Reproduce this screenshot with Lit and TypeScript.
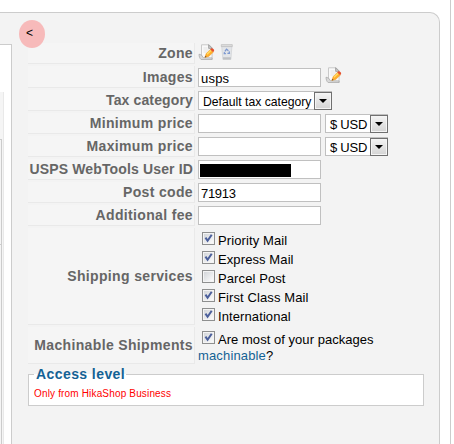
import { LitElement, html, css } from "lit";
import { customElement } from "lit/decorators.js";
import { classMap } from "lit/directives/class-map.js";

const editIcon = html`<svg class="icon" width="17" height="16" viewBox="0 0 17 16">
  <path d="M3.5.8h7.6l3 3v11.4H3.5z" fill="#f9f9f9" stroke="#c4c4c4" stroke-width=".9"/>
  <path d="M10.6.8v3.6h3.7z" fill="#c9c9c9" stroke="#8f8f8f" stroke-width=".7"/>
  <path d="M5.5 4h4M5.5 6h6M5.5 8h4" stroke="#e3e3e3"/>
  <path d="M1 10.2l2.5.8 1.8 2.7 8.8.2v1.7H3.2C1.7 14.5 1 12.5 1 10.2z" fill="#d9d9d9" stroke="#a5a5a5" stroke-width=".7"/>
  <path d="M6.8 13.4l1.4-3.8 4.3-4.2 2.9 2.7-4.7 4.3z" fill="#ffae2c" stroke="#f09a22" stroke-width=".5"/>
  <path d="M9 10.3l4.2-4.1" stroke="#ffdf66" stroke-width="1.2"/>
  <path d="M12.2 5.5l1-1.1c1-.9 3.6 1.2 2.9 2.5l-1 1.2z" fill="#e5502f"/>
  <path d="M6.8 13.4l.6-1.7 1.2 1.2z" fill="#6b4a35"/></svg>`;

const trashIcon = html`<svg class="icon" width="16" height="16" viewBox="0 0 16 16">
  <path d="M2.7 2.2h10.2l-1 13.2H3.9z" fill="#e3e5e8" stroke="#cfd1d4" stroke-width=".7"/>
  <path d="M2.3.6h11v2h-11z" fill="#dedede" stroke="#b5b5b5" stroke-width=".6"/>
  <path d="M3.9 13.2h8l-.2 2.2H4.1z" fill="#bfc1c4"/>
  <path d="M5.9 7.4L7.5 5.2l1.9 1.6M10.2 7.4l.2 2H8.4M6.9 9.7H5.3l.2-1.6" fill="none" stroke="#7d99d0" stroke-width="1.3"/></svg>`;

@customElement("app-root")
export class AppRoot extends LitElement {
  static styles = css`
    :host { display: block; position: relative; width: 454px; height: 444px; overflow: hidden; background: #fff;
      font: 13px/16px "Liberation Sans", Arial, sans-serif; color: #000; }
    * { box-sizing: border-box; }
    .page { width: 451px; height: 444px; border-right: 1px solid #ccc; padding-top: 12px; }
    .panel { width: 440px; height: 440px; border: 1px solid #ccc; border-width: 1px 1px 0 0; border-radius: 0 10px 0 0;
      background: #f3f3f3; display: flex; padding-top: 30px; }
    .side { flex: none; margin-top: 1px; width: 12px; height: 420px; background: #fff; border: 1px solid #ccc; border-left: 0; padding-top: 47px; }
    .sidebar { width: 4px; height: 380px; background: #f5f5f5; border-right: 1px solid #e9e9e9; padding-top: 47px; }
    .box { width: 2px; height: 330px; border: 1px solid #ccc; border-left: 0; }
    .box i { display: block; height: 105px; border-bottom: 1px solid #ccc; }
    .main { margin-left: 16px; width: 396px; }
    .form { display: grid; grid-template-columns: 167px 1fr; column-gap: 3px; row-gap: 2px;
      grid-template-rows: 21px 22px repeat(6, 21px) 97px 37px; }
    .label { background: #f5f5f5; border: 1px solid #e9e9e9; border-width: 0 1px 1px 0; display: flex; align-items: center;
      justify-content: flex-end; font-weight: bold; font-size: 14px; letter-spacing: .35px; color: #666; padding-right: 1px; white-space: nowrap; }
    .tight { letter-spacing: .14px; }
    .value { display: flex; align-items: flex-start; padding-top: 1px; gap: 4px; }
    .input { width: 123px; height: 19px; border: 1px solid #c0c0c0; background: #fff; padding: 2px 0 0 2px; letter-spacing: .2px; }
    .digits { letter-spacing: -.3px; }
    .redact { width: 91px; height: 13px; background: #000; margin-top: 1px; margin-left: -1px; }
    .select { height: 19px; border: 1px solid #c0c0c0; background: #fff; display: flex; justify-content: space-between; padding-left: 4px; white-space: nowrap; line-height: 20px; }
    .tax { width: 134px; font-size: 12.2px; }
    .usd { width: 63px; letter-spacing: -.25px; line-height: 19px; }
    .arrow { width: 18px; height: 18px; margin-right: -1px; border: 1px solid #707070; background: linear-gradient(#f4f4f4, #d4d4d4);
      box-shadow: inset 0 0 0 1px #f5f5f5; flex: none; display: grid; place-items: center; }
    .arrow svg { display: block; }
    .icon { display: block; flex: none; }
    .zone { gap: 4px; }
    .images { padding-top: 2px; }
    .images .icon { margin-top: -1px; }
    .list { flex-direction: column; gap: 0; padding: 4px 0 0 4px; }
    .check { display: flex; gap: 3px; height: 19px; flex: none; letter-spacing: .1px; }
    .check span { padding-top: 1px; white-space: nowrap; }
    .cb { display: block; width: 13px; height: 13px; flex: none; border: 1px solid #8e8f8f; background: linear-gradient(135deg, #cfd2d6, #fff);
      box-shadow: inset 0 0 0 1px #f4f4f4; }
    .cb svg { display: block; }
    .mach { display: block; padding: 4px 0 0; letter-spacing: .15px; }
    .mach .check { margin-left: 4px; height: 17px; letter-spacing: .04px; }
    .mach a { color: #146295; }
    .access { position: relative; margin-top: 10px; height: 32px; border: 1px solid #ccc; background: #fff; padding: 12px 0 0 5px;
      font-size: 10px; line-height: 14px; letter-spacing: .16px; color: #f00; white-space: nowrap; }
    .legend { position: absolute; left: 5px; top: -9px; padding: 0 1px 0 2px; font: bold 14px/16px "Liberation Sans", Arial, sans-serif;
      letter-spacing: .42px; color: #146295; background: linear-gradient(#f3f3f3 8px, #fff 8px); }
    .marker { position: absolute; left: 19px; top: 20px; width: 26px; height: 28px; border-radius: 50%; background: #f7baba;
      font-size: 12px; line-height: 27px; padding-left: 7px; }
  `;

  private check(text: string, on = true) {
    return html`<div class="check"><i class="cb">${on
      ? html`<svg width="11" height="11" viewBox="0 0 11 11"><path d="M2.5 4.6l2.1 3.2L8.7 1.7" fill="none" stroke="#4b5f9b" stroke-width="2"/></svg>`
      : ""}</i><span>${text}</span></div>`;
  }

  private select(text: string, kind: string) {
    return html`<div class=${classMap({ select: true, [kind]: true })}><span>${text}</span>
      <i class="arrow"><svg width="8" height="4" viewBox="0 0 8 4"><path d="M0 0h8L4 4z"/></svg></i></div>`;
  }

  private row(label: string, content: unknown, kind = "", tight = false) {
    return html`<div class=${classMap({ label: true, tight })}><span>${label}</span></div><div class="value ${kind}">${content}</div>`;
  }

  render() {
    const blank = html`<div class="input"></div>`;
    return html`
      <div class="page"><div class="panel">
        <div class="side"><div class="sidebar"><div class="box"><i></i></div></div></div>
        <div class="main">
          <div class="form">
            ${this.row("Zone", html`${editIcon}${trashIcon}`, "zone")}
            ${this.row("Images", html`<div class="input">usps</div>${editIcon}`, "images")}
            ${this.row("Tax category", this.select("Default tax category", "tax"), "", true)}
            ${this.row("Minimum price", html`${blank}${this.select("$ USD", "usd")}`)}
            ${this.row("Maximum price", html`${blank}${this.select("$ USD", "usd")}`)}
            ${this.row("USPS WebTools User ID", html`<div class="input"><div class="redact"></div></div>`, "", true)}
            ${this.row("Post code", html`<div class="input digits">71913</div>`)}
            ${this.row("Additional fee", blank)}
            ${this.row("Shipping services", html`${this.check("Priority Mail")}${this.check("Express Mail")}${this.check("Parcel Post", false)}${this.check("First Class Mail")}${this.check("International")}`, "list")}
            ${this.row("Machinable Shipments", html`${this.check("Are most of your packages")}<div><a>machinable</a>?</div>`, "mach")}
          </div>
          <div class="access"><span class="legend">Access level</span><span>Only from HikaShop Business</span></div>
        </div>
      </div></div>
      <div class="marker">&lt;</div>`;
  }
}
